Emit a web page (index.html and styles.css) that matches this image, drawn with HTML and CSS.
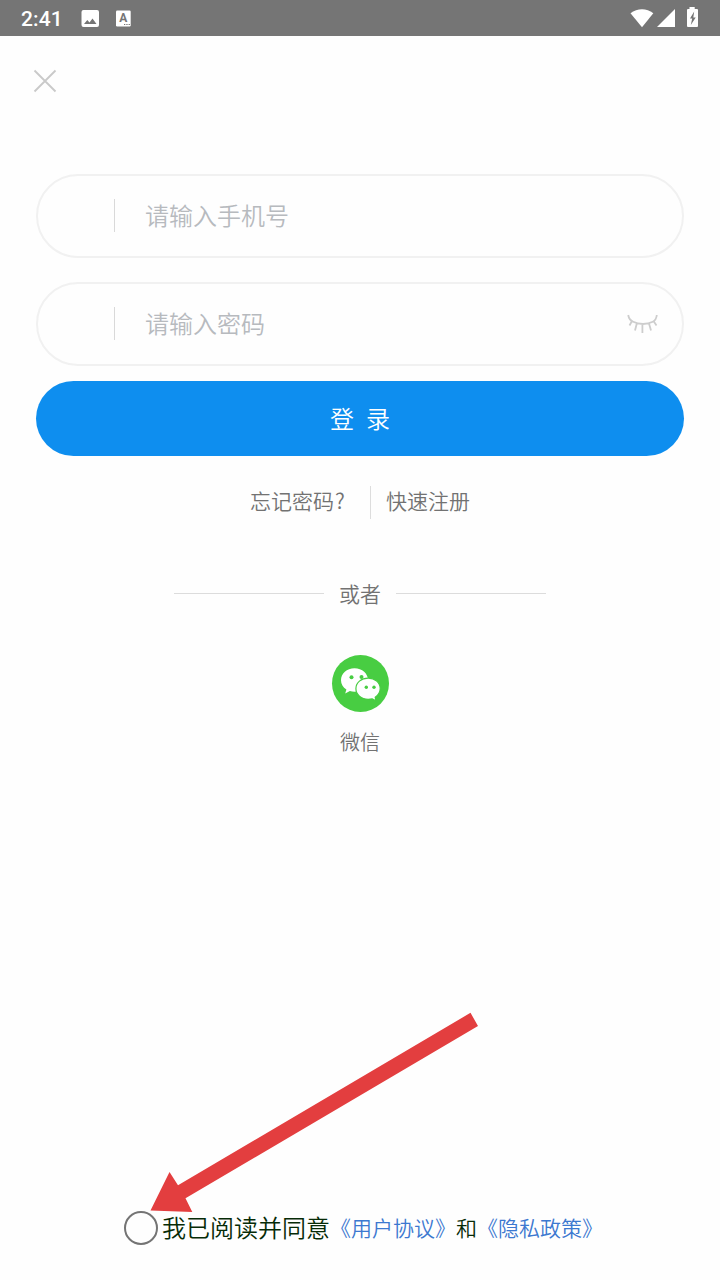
FILE: index.html
```html
<!DOCTYPE html>
<html lang="zh-CN">
<head>
<meta charset="utf-8">
<title>登录</title>
<link rel="stylesheet" href="styles.css">
</head>
<body>
<header class="status-bar">
  <span class="clock">2:41</span>
  <svg class="status-left" width="52" height="20" viewBox="0 0 52 20">
    <path fill="#fff" fill-rule="evenodd" d="M3.500 1h13.500a2 2 0 0 1 2 2v13a2 2 0 0 1-2 2H3.500a2 2 0 0 1-2-2V3a2 2 0 0 1 2-2zM4 15h12.500l-4-5.500-3 4-2.200-2.500z"/>
    <rect x="36" y="1.500" width="14.700" height="16" rx="1.200" fill="#fff"/>
    <text x="43.300" y="13" class="badge-letter">A</text>
    <path d="M44 15.500h1.300M46.300 15.500h1.300M48.600 15.500h1.300" stroke="#757575" stroke-width="1.200"/>
  </svg>
  <svg class="status-right" width="70" height="22" viewBox="0 0 70 22">
    <path fill="#fff" d="M.5 6.200C7.500.8 16.500.8 23.300 6.200L12 20.300z"/>
    <path fill="#fff" d="M45 2v18H27z"/>
    <path fill="#fff" d="M59.500 0h5.200v2h2.300q1 0 1 1v16q0 1-1 1h-9q-1 0-1-1V3q0-1 1-1h1.500z"/>
    <path fill="#757575" d="M64.200 4.500 60 11.500h2.200L60.800 18l4.900-7.500h-2.400z"/>
  </svg>
</header>
<main class="login">
  <button class="close" aria-label="关闭">
    <svg width="24" height="24" viewBox="0 0 24 24"><path d="M1.500 1.500l21 21M22.500 1.500l-21 21" stroke="#c9c9c9" stroke-width="1.800"/></svg>
  </button>
  <form class="form">
    <div class="field"><span class="rule"></span><span class="placeholder">请输入手机号</span></div>
    <div class="field"><span class="rule"></span><span class="placeholder">请输入密码</span>
      <svg class="eye" width="32" height="20" viewBox="0 0 32 20" fill="none" stroke="#cdcdcd" stroke-width="1.800"><path d="M1.200 1C1.700 4 3.300 6.500 6.200 7.800c5.500 2.900 14 2.900 19.600 0C28.200 6.500 29.500 4 29.800 1M5 7 2.500 11.500M9.800 9.500 8 16.500M15.400 10v9M22 9.500l2 7M26.500 7l3 4.500"/></svg>
    </div>
    <button class="submit" type="button"><span>登</span><span>录</span></button>
  </form>
  <nav class="links"><a class="forgot">忘记密码<span class="mark">?</span></a><span class="link-rule"></span><a class="register">快速注册</a></nav>
  <div class="divider"><span>或者</span></div>
  <a class="wechat">
    <svg width="58" height="58" viewBox="0 0 58 58">
      <circle cx="29.500" cy="28.500" r="28.500" fill="#48cd42"/>
      <g transform="translate(.5 -.2)">
        <path fill="#fff" d="M23 13.500c-7.700 0-13.500 5.200-13.500 12 0 4 2 7 5.400 9.300l-1.200 3.800 4.700-2.400q2.200.8 4.600.8c7.700 0 13.600-5 13.600-11.500S30.700 13.500 23 13.500z"/>
        <path fill="#fff" stroke="#48cd42" stroke-width="1.200" d="M36.700 23.300c-7 0-12.300 4.500-12.300 10.500s5.300 10.700 12.300 10.700q2.100 0 4-.5l3.800 2-.8-3.600c3-2 5-5 5-8.600 0-6-5.300-10.500-12-10.500z"/>
        <g fill="#48cd42"><circle cx="20" cy="22.500" r="2"/><circle cx="30" cy="22.300" r="2"/><circle cx="34.800" cy="32.500" r="1.700"/><circle cx="42.500" cy="32.500" r="1.700"/></g>
      </g>
    </svg>
    <span>微信</span>
  </a>
  <footer class="agreement"><span class="radio"></span><span class="agree">我已阅读并同意</span><a class="terms">《用户协议》</a><span class="and">和</span><a class="privacy">《隐私政策》</a></footer>
</main>
<svg class="arrow" width="330" height="202" viewBox="150 1012 330 202"><path fill="#e33e3f" d="M150.500 1210.500 169.500 1172 178 1185.300 470.500 1012.800 478 1026 185.500 1198.300 192.300 1212z"/></svg>
</body>
</html>
```
FILE: styles.css
```css
* { box-sizing: border-box; }
body {
  margin: 0;
  width: 720px;
  height: 1280px;
  display: flex;
  flex-direction: column;
  position: relative;
  overflow: hidden;
  background: #fefefe;
  color: #727272;
  font-family: "Noto Sans CJK SC DemiLight", "Noto Sans CJK SC", sans-serif;
  font-weight: 350;
}
button { border: 0; padding: 0; background: none; font: inherit; }
svg { display: block; flex: none; }
.status-bar {
  height: 36px;
  flex: none;
  display: flex;
  align-items: center;
  padding: 0 21px;
  background: #757575;
}
.clock { width: 59px; color: #fff; font: 500 21px/36px Roboto, sans-serif; letter-spacing: .1px; padding-top: 1px; }
.status-left { margin-top: 1px; }
.badge-letter { font: 700 12px Roboto, sans-serif; fill: #757575; text-anchor: middle; }
.status-right { margin-left: auto; margin-right: -1px; }
.login { flex: 1; display: flex; flex-direction: column; padding: 33px 36px 34px; }
.close { width: 24px; height: 24px; margin-left: -3px; }
.form { display: flex; flex-direction: column; margin-top: 81px; }
.field {
  height: 84px;
  margin-bottom: 24px;
  display: flex;
  align-items: center;
  padding: 0 23px 0 76px;
  border: 2px solid #f1f1f1;
  border-radius: 42px;
  font-size: 24px;
  color: #b7babe;
}
.field:nth-child(2) { margin-bottom: 15px; }
.rule { width: 1px; height: 33px; margin-top: -2px; background: #d9d9d9; }
.placeholder { margin-left: 30px; margin-top: -2px; line-height: 36px; }
.eye { margin-left: auto; margin-top: -1px; }
.submit {
  height: 75px;
  display: flex;
  align-items: center;
  justify-content: center;
  gap: 12px;
  padding-bottom: 3px;
  border-radius: 38px;
  background: #0e8eef;
  color: #fff;
  font-size: 24px;
}
.links {
  height: 33px;
  margin-top: 30px;
  display: flex;
  align-items: center;
  padding-left: 214px;
  font-size: 21px;
  line-height: 30px;
}
.forgot { width: 120px; }
.forgot, .register { margin-top: -5px; }
.mark { margin-left: 1px; }
.link-rule { width: 1px; height: 33px; margin-right: 15px; background: #ddd; }
.divider {
  height: 30px;
  margin-top: 59px;
  padding: 0 138px;
  display: flex;
  align-items: center;
  gap: 15px;
  font-size: 21px;
  line-height: 30px;
}
.divider::before, .divider::after { content: ""; flex: 1; height: 1px; background: #dcdcdc; }
.wechat {
  display: flex;
  flex-direction: column;
  align-items: center;
  align-self: center;
  gap: 14px;
  margin-top: 47px;
  font-size: 20px;
  line-height: 30px;
}
.agreement {
  margin-top: auto;
  height: 36px;
  display: flex;
  align-items: center;
  padding-left: 88px;
  white-space: nowrap;
  font-size: 21px;
  line-height: 36px;
  color: #062b06;
}
.radio { width: 34px; height: 34px; margin-right: 4px; border: 2px solid #747474; border-radius: 50%; }
.agree { width: 168px; margin-top: -3px; font-size: 24px; }
.terms, .privacy { width: 126px; color: #3c78d0; }
.terms, .and, .privacy { margin-top: -3px; }
.and { width: 21px; }
.arrow { position: absolute; left: 150px; top: 1012px; }
```
